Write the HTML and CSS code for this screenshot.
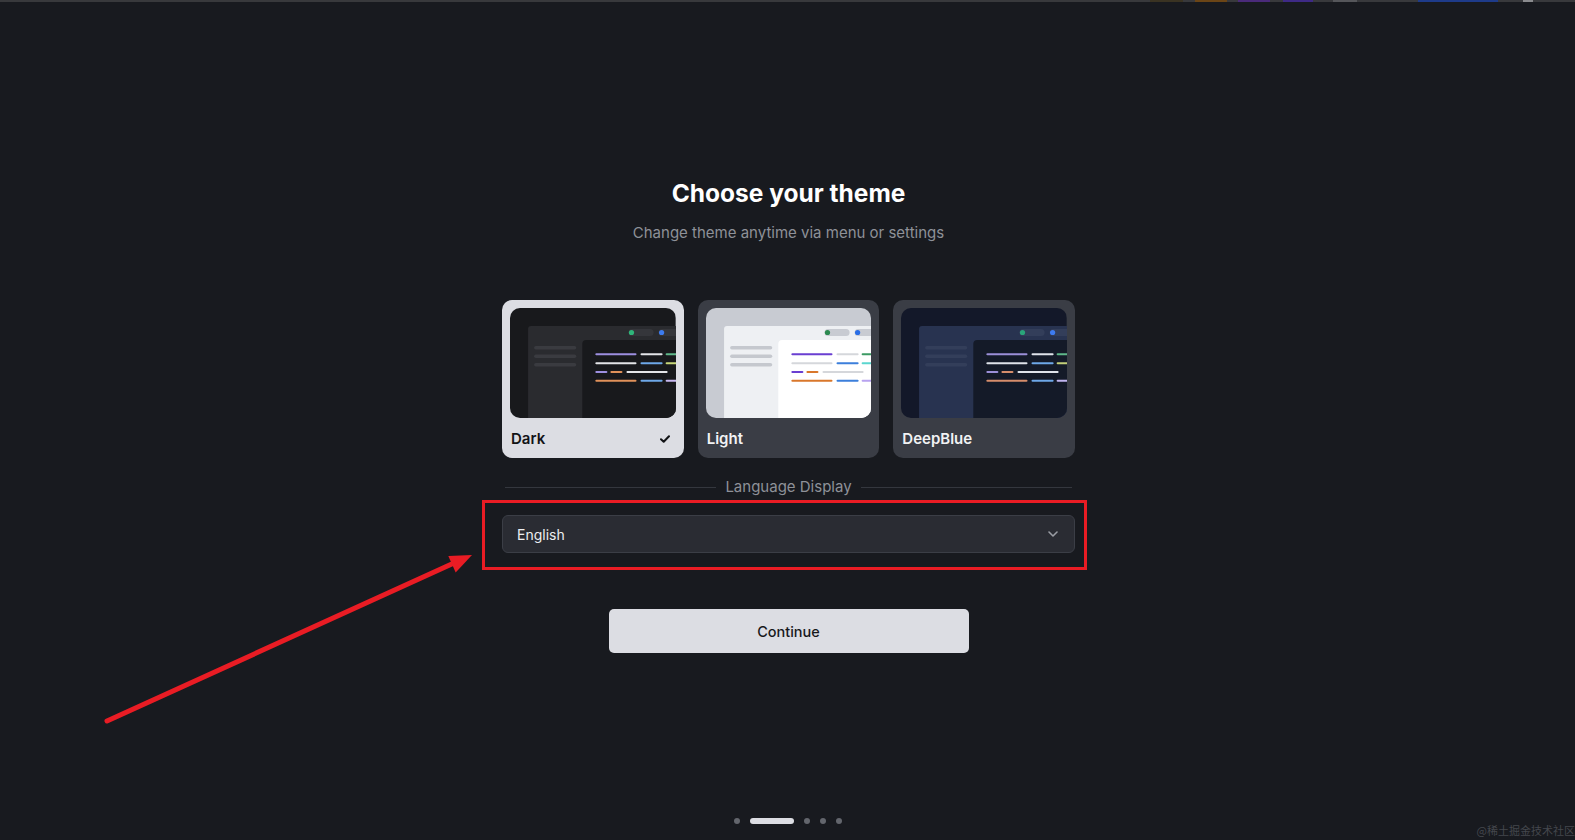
FILE: index.html
```html
<!DOCTYPE html>
<html lang="en">
<head>
<meta charset="utf-8">
<title>Choose your theme</title>
<link rel="stylesheet" href="styles.css">
</head>
<body>
<div class="topbar"></div>

<main class="setup">
  <h1 class="title">Choose your theme</h1>
  <p class="subtitle">Change theme anytime via menu or settings</p>

  <div class="themes">
    <div class="card selected">
      <div class="preview pv-dark">
        <svg viewBox="0 0 165 110" preserveAspectRatio="none">
          <rect class="bg" width="165" height="110"/>
          <rect class="win" x="18" y="18" width="160" height="100" rx="3"/>
          <rect class="pill" x="118" y="21" width="25" height="7" rx="3.5"/>
          <circle class="dot-g" cx="121" cy="24.5" r="2.6"/>
          <rect class="pill" x="148" y="21" width="25" height="7" rx="3.5"/>
          <circle class="dot-b" cx="151" cy="24.5" r="2.6"/>
          <rect class="panel" x="72" y="32" width="100" height="90" rx="4"/>
          <rect class="side" x="24" y="38" width="42" height="3.6" rx="1.8"/>
          <rect class="side" x="24" y="46.5" width="42" height="3.6" rx="1.8"/>
          <rect class="side" x="24" y="55" width="42" height="3.6" rx="1.8"/>
          <rect class="c-purple" x="85" y="45.3" width="41" height="2" rx="1"/>
          <rect class="c-white" x="130" y="45.3" width="22" height="2" rx="1"/>
          <rect class="c-green" x="155" y="45.3" width="20" height="2" rx="1"/>
          <rect class="c-white" x="85" y="54.3" width="41" height="2" rx="1"/>
          <rect class="c-blue" x="130" y="54.3" width="22" height="2" rx="1"/>
          <rect class="c-lime" x="155" y="54.3" width="20" height="2" rx="1"/>
          <rect class="c-purple" x="85" y="63" width="12" height="2" rx="1"/>
          <rect class="c-orange" x="100" y="63" width="12" height="2" rx="1"/>
          <rect class="c-white" x="116" y="63" width="41" height="2" rx="1"/>
          <rect class="c-orange" x="85" y="71.7" width="41" height="2" rx="1"/>
          <rect class="c-blue" x="130" y="71.7" width="22" height="2" rx="1"/>
          <rect class="c-lav" x="155" y="71.7" width="20" height="2" rx="1"/>
        </svg>
      </div>
      <div class="card-label">
        <span>Dark</span>
        <svg class="check" viewBox="0 0 10 8" width="10" height="8"><path d="M1 4.2 L3.7 6.8 L9 1.2"/></svg>
      </div>
    </div>

    <div class="card">
      <div class="preview pv-light">
        <svg viewBox="0 0 165 110" preserveAspectRatio="none">
          <rect class="bg" width="165" height="110"/>
          <rect class="win" x="18" y="18" width="160" height="100" rx="3"/>
          <rect class="pill" x="118" y="21" width="25" height="7" rx="3.5"/>
          <circle class="dot-g" cx="121" cy="24.5" r="2.6"/>
          <rect class="pill" x="148" y="21" width="25" height="7" rx="3.5"/>
          <circle class="dot-b" cx="151" cy="24.5" r="2.6"/>
          <rect class="panel" x="72" y="32" width="100" height="90" rx="4"/>
          <rect class="side" x="24" y="38" width="42" height="3.6" rx="1.8"/>
          <rect class="side" x="24" y="46.5" width="42" height="3.6" rx="1.8"/>
          <rect class="side" x="24" y="55" width="42" height="3.6" rx="1.8"/>
          <rect class="c-purple" x="85" y="45.3" width="41" height="2" rx="1"/>
          <rect class="c-white" x="130" y="45.3" width="22" height="2" rx="1"/>
          <rect class="c-green" x="155" y="45.3" width="20" height="2" rx="1"/>
          <rect class="c-white" x="85" y="54.3" width="41" height="2" rx="1"/>
          <rect class="c-blue" x="130" y="54.3" width="22" height="2" rx="1"/>
          <rect class="c-lime" x="155" y="54.3" width="20" height="2" rx="1"/>
          <rect class="c-purple" x="85" y="63" width="12" height="2" rx="1"/>
          <rect class="c-orange" x="100" y="63" width="12" height="2" rx="1"/>
          <rect class="c-white" x="116" y="63" width="41" height="2" rx="1"/>
          <rect class="c-orange" x="85" y="71.7" width="41" height="2" rx="1"/>
          <rect class="c-blue" x="130" y="71.7" width="22" height="2" rx="1"/>
          <rect class="c-lav" x="155" y="71.7" width="20" height="2" rx="1"/>
        </svg>
      </div>
      <div class="card-label"><span>Light</span></div>
    </div>

    <div class="card">
      <div class="preview pv-blue">
        <svg viewBox="0 0 165 110" preserveAspectRatio="none">
          <rect class="bg" width="165" height="110"/>
          <rect class="win" x="18" y="18" width="160" height="100" rx="3"/>
          <rect class="pill" x="118" y="21" width="25" height="7" rx="3.5"/>
          <circle class="dot-g" cx="121" cy="24.5" r="2.6"/>
          <rect class="pill" x="148" y="21" width="25" height="7" rx="3.5"/>
          <circle class="dot-b" cx="151" cy="24.5" r="2.6"/>
          <rect class="panel" x="72" y="32" width="100" height="90" rx="4"/>
          <rect class="side" x="24" y="38" width="42" height="3.6" rx="1.8"/>
          <rect class="side" x="24" y="46.5" width="42" height="3.6" rx="1.8"/>
          <rect class="side" x="24" y="55" width="42" height="3.6" rx="1.8"/>
          <rect class="c-purple" x="85" y="45.3" width="41" height="2" rx="1"/>
          <rect class="c-white" x="130" y="45.3" width="22" height="2" rx="1"/>
          <rect class="c-green" x="155" y="45.3" width="20" height="2" rx="1"/>
          <rect class="c-white" x="85" y="54.3" width="41" height="2" rx="1"/>
          <rect class="c-blue" x="130" y="54.3" width="22" height="2" rx="1"/>
          <rect class="c-lime" x="155" y="54.3" width="20" height="2" rx="1"/>
          <rect class="c-purple" x="85" y="63" width="12" height="2" rx="1"/>
          <rect class="c-orange" x="100" y="63" width="12" height="2" rx="1"/>
          <rect class="c-white" x="116" y="63" width="41" height="2" rx="1"/>
          <rect class="c-orange" x="85" y="71.7" width="41" height="2" rx="1"/>
          <rect class="c-blue" x="130" y="71.7" width="22" height="2" rx="1"/>
          <rect class="c-lav" x="155" y="71.7" width="20" height="2" rx="1"/>
        </svg>
      </div>
      <div class="card-label"><span>DeepBlue</span></div>
    </div>
  </div>

  <div class="divider"><span>Language Display</span></div>

  <div class="select">
    <span>English</span>
    <svg class="chevron" viewBox="0 0 10 6" width="10" height="6"><path d="M1 1 L5 5 L9 1"/></svg>
  </div>

  <button class="continue">Continue</button>
</main>

<footer class="pager">
  <span class="dot"></span>
  <span class="dot active"></span>
  <span class="dot"></span>
  <span class="dot"></span>
  <span class="dot"></span>
</footer>

<div class="watermark">@稀土掘金技术社区</div>

<svg class="annotation" viewBox="0 0 1575 840" width="1575" height="840">
  <rect x="483.5" y="501.5" width="602" height="67" class="mark-box"/>
  <line x1="107" y1="721" x2="454" y2="563" class="mark-line"/>
  <polygon points="472,555 448.3,556 455.7,572.4" class="mark-head"/>
</svg>
</body>
</html>
```

FILE: styles.css
```css
html, body {
  margin: 0;
  padding: 0;
}

body {
  background: #181a1f;
  font-family: Inter, "Noto Sans", "Liberation Sans", sans-serif;
  height: 100vh;
  display: flex;
  flex-direction: column;
  position: relative;
  overflow: hidden;
}

.topbar {
  height: 2px;
  flex: none;
  background: linear-gradient(to right,
    #38393c 0 1150px,
    #3a3322 1150px 1183px,
    #38393c 1183px 1195px,
    #6b4516 1195px 1227px,
    #38393c 1227px 1238px,
    #4a2a7a 1238px 1270px,
    #38393c 1270px 1283px,
    #3e2a86 1283px 1313px,
    #38393c 1313px 1333px,
    #55565a 1333px 1357px,
    #38393c 1357px 1418px,
    #1e3b8a 1418px 1498px,
    #38393c 1498px 1523px,
    #8a8b8e 1523px 1533px,
    #38393c 1533px 100%);
}

.setup {
  width: 573px;
  margin: 0 auto;
  padding: 175px 0 0 2px;
  display: flex;
  flex-direction: column;
  align-items: center;
}

.title {
  margin: 0;
  font-size: 24.5px;
  line-height: 32px;
  font-weight: 700;
  color: #ffffff;
}

.subtitle {
  margin: 14px 0 0;
  font-size: 15px;
  line-height: 20px;
  color: #8e9198;
}

.themes {
  display: grid;
  grid-template-columns: repeat(3, 1fr);
  gap: 14px;
  width: 100%;
  margin-top: 57px;
}

.card {
  background: #3a3d45;
  border-radius: 10px;
  padding: 8px 8px 10px;
}

.card.selected {
  background: #dcdde3;
}

.preview {
  height: 110px;
  border-radius: 10px;
  overflow: hidden;
}

.preview svg {
  display: block;
  width: 100%;
  height: 100%;
}

.card-label {
  display: flex;
  justify-content: space-between;
  align-items: center;
  margin-top: 11px;
  padding: 0 6px 0 1px;
  font-size: 15px;
  line-height: 20px;
  font-weight: 600;
  color: #f1f2f4;
}

.card:not(.selected) .card-label {
  margin-top: 11px;
}

.card {
  padding-bottom: 9px;
}

.selected .card-label {
  color: #121316;
}

.check path {
  fill: none;
  stroke: #121316;
  stroke-width: 2;
  stroke-linecap: round;
  stroke-linejoin: round;
}

/* Dark preview */
.pv-dark .bg { fill: #18191c; }
.pv-dark .win { fill: #2a2b2f; }
.pv-dark .panel { fill: #18191c; }
.pv-dark .pill { fill: #35363b; }
.pv-dark .side { fill: #3a3b40; }
.pv-dark .dot-g { fill: #2fb57a; }
.pv-dark .dot-b { fill: #3d7cf0; }
.pv-dark .c-purple { fill: #9d8fe0; }
.pv-dark .c-white { fill: #e4e5e8; }
.pv-dark .c-green { fill: #5fb88a; }
.pv-dark .c-blue { fill: #6ea8e8; }
.pv-dark .c-lime { fill: #c8d87a; }
.pv-dark .c-orange { fill: #e0915a; }
.pv-dark .c-lav { fill: #c7b8f0; }

/* Light preview */
.pv-light .bg { fill: #c8cbd2; }
.pv-light .win { fill: #eef0f3; }
.pv-light .panel { fill: #ffffff; }
.pv-light .pill { fill: #c8cbd2; }
.pv-light .side { fill: #c5c8ce; }
.pv-light .dot-g { fill: #2c8a50; }
.pv-light .dot-b { fill: #2a6ee6; }
.pv-light .c-purple { fill: #6a3fd1; }
.pv-light .c-white { fill: #d5d7db; }
.pv-light .c-green { fill: #3c9a63; }
.pv-light .c-blue { fill: #3c7fdb; }
.pv-light .c-lime { fill: #5ad6cf; }
.pv-light .c-orange { fill: #d9772b; }
.pv-light .c-lav { fill: #b8a3f0; }

/* DeepBlue preview */
.pv-blue .bg { fill: #131829; }
.pv-blue .win { fill: #283350; }
.pv-blue .panel { fill: #141a28; }
.pv-blue .pill { fill: #333e5a; }
.pv-blue .side { fill: #333e5a; }
.pv-blue .dot-g { fill: #2aa57a; }
.pv-blue .dot-b { fill: #3d7bf0; }
.pv-blue .c-purple { fill: #9b8fd8; }
.pv-blue .c-white { fill: #dfe3ea; }
.pv-blue .c-green { fill: #5fb88a; }
.pv-blue .c-blue { fill: #6ea8e8; }
.pv-blue .c-lime { fill: #c4d07a; }
.pv-blue .c-orange { fill: #d68d6b; }
.pv-blue .c-lav { fill: #c0b5ef; }

.divider {
  display: flex;
  align-items: center;
  gap: 9px;
  width: 100%;
  box-sizing: border-box;
  padding: 0 3px;
  margin-top: 19px;
  font-size: 15px;
  line-height: 20px;
  color: #8e9198;
}

.divider::before,
.divider::after {
  content: "";
  flex: 1;
  height: 1px;
  background: #34373e;
}

.select {
  margin-top: 18px;
  width: 100%;
  height: 38px;
  box-sizing: border-box;
  background: #2a2c33;
  border: 1px solid #3b3e46;
  border-radius: 6px;
  display: flex;
  align-items: center;
  justify-content: space-between;
  padding: 0 16px 0 14px;
  font-size: 14px;
  color: #eceef1;
}

.chevron path {
  fill: none;
  stroke: #9a9da4;
  stroke-width: 1.6;
  stroke-linecap: round;
  stroke-linejoin: round;
}

.continue {
  margin-top: 56px;
  width: 360px;
  height: 44px;
  border: 0;
  border-radius: 5px;
  background: #dcdde3;
  color: #17181b;
  font-family: Inter, "Noto Sans", sans-serif;
  font-size: 14.5px;
  font-weight: 500;
  padding: 0;
}

.pager {
  margin-top: auto;
  padding-bottom: 16px;
  display: flex;
  justify-content: center;
  align-items: center;
  gap: 10px;
}

.dot {
  width: 6px;
  height: 6px;
  border-radius: 3px;
  background: #63666d;
}

.dot.active {
  width: 44px;
  background: #dcdde3;
}

.watermark {
  position: absolute;
  right: 0;
  bottom: 3px;
  font-family: "Noto Sans CJK SC", sans-serif;
  font-size: 11px;
  line-height: 14px;
  color: #44474d;
}

.annotation {
  position: absolute;
  left: 0;
  top: 0;
  pointer-events: none;
}

.mark-box {
  fill: none;
  stroke: #e91c24;
  stroke-width: 3;
}

.mark-line {
  stroke: #e91c24;
  stroke-width: 5;
  stroke-linecap: round;
}

.mark-head {
  fill: #e91c24;
}
```
